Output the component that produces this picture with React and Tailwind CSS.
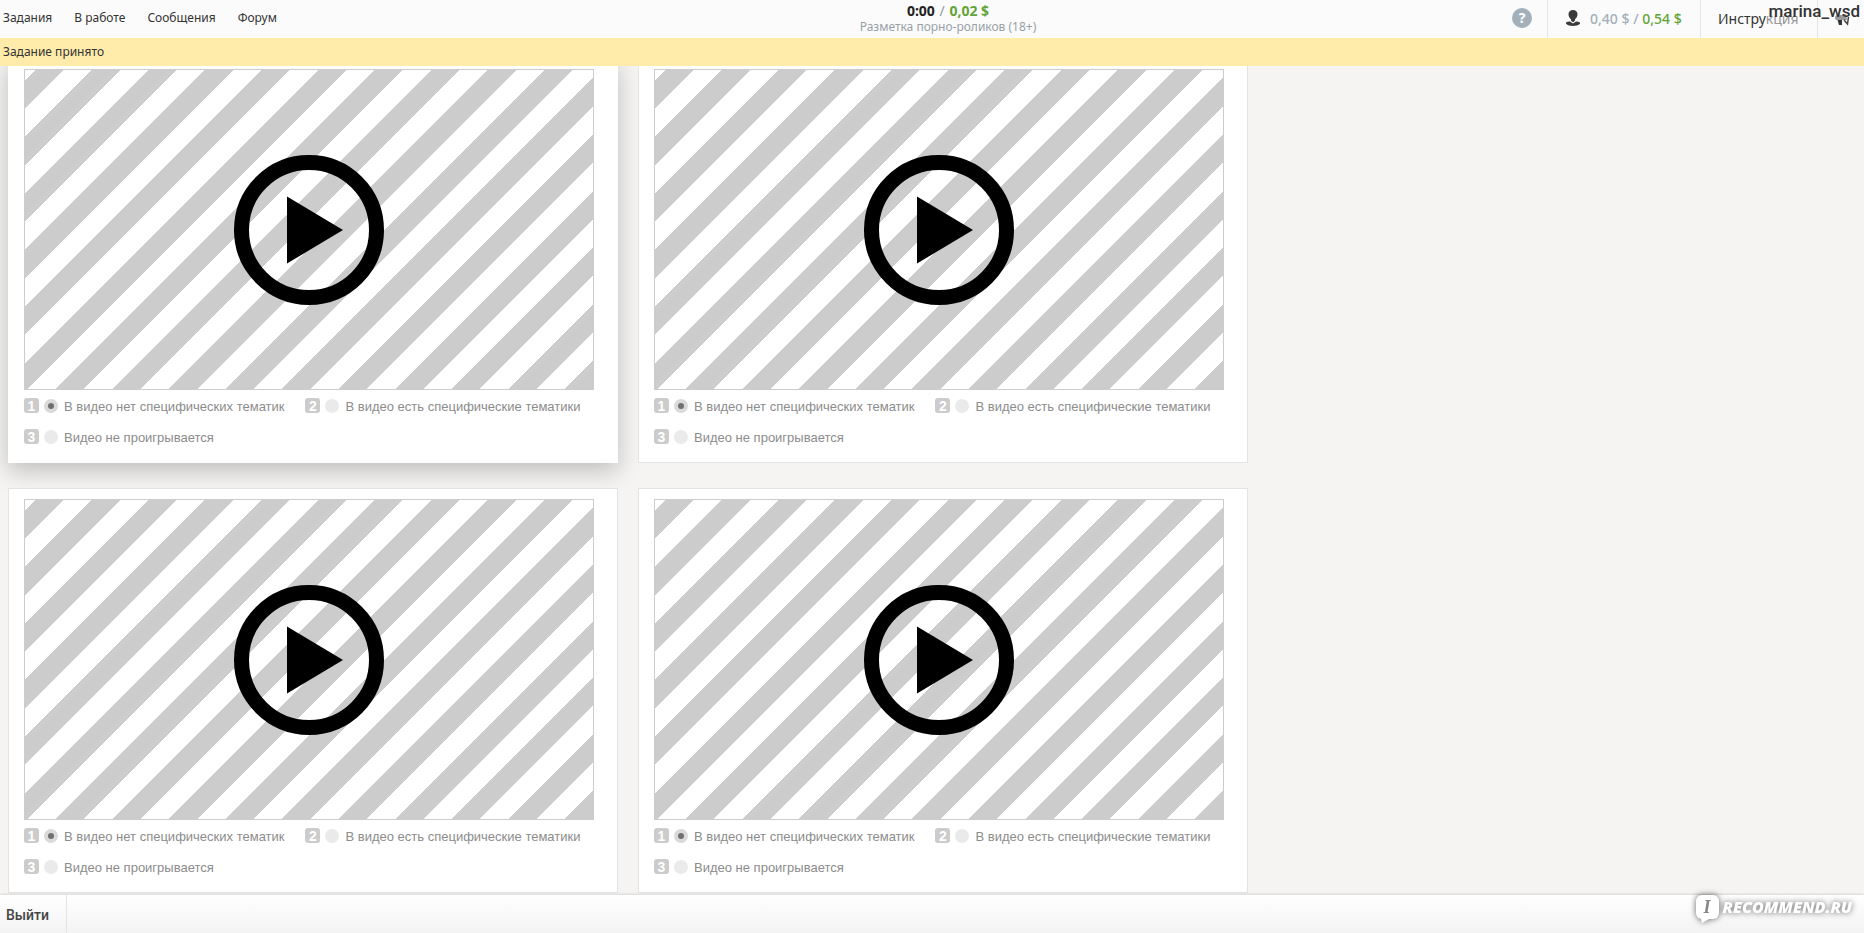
import { useState } from 'react';

const navLinks = ['Задания', 'В работе', 'Сообщения', 'Форум'];

const options = [
  'В видео нет специфических тематик',
  'В видео есть специфические тематики',
  'Видео не проигрывается',
];

const tasks = [
  { id: 1, active: true },
  { id: 2, active: false },
  { id: 3, active: false },
  { id: 4, active: false },
];

const UserIcon = () => (
  <svg width="16" height="18" viewBox="0 0 16 18" fill="#3c3c3c" aria-hidden="true">
    <path d="M8 1c2.800 0 4.500 1.800 4.500 4.300 0 2.200-1.100 4-2.500 5v1.500L8 13.200 6 11.800v-1.500c-1.400-1-2.500-2.800-2.500-5C3.500 2.800 5.200 1 8 1z" />
    <path d="M1 13.600c1.200-.8 2.600-1.200 4-1.100l3 1.900 3-1.900c1.400-.1 2.800.3 4 1.100v1.200C13.400 16.300 10.900 17 8 17s-5.400-.7-7-2.200z" />
  </svg>
);

const MegaphoneIcon = () => (
  <svg width="16" height="14" viewBox="0 0 16 14" aria-hidden="true">
    <path d="M1 5.500C1 4 2 3 3.500 3H9l3-1 1 6H2.500C1.500 8 1 7 1 5.500z" fill="#999" />
    <path d="M3.500 8H8v5H5z" fill="#333" />
    <path d="M10 8l3.500 4 1-7" fill="none" stroke="#444" strokeWidth="1.500" />
  </svg>
);

const PlayIcon = () => (
  <svg width="150" height="150" viewBox="0 0 150 150" aria-hidden="true">
    <circle cx="75" cy="75" r="67.500" fill="none" stroke="#000" strokeWidth="15" />
    <path d="M53 41.500v67l56-33.500z" fill="#000" />
  </svg>
);

const TaskCard = ({ id, active }) => {
  const [selected, setSelected] = useState(0);

  return (
    <section
      className={`w-[610px] max-w-full border bg-white px-[15px] pt-[10px] pb-[18px] ${
        active
          ? 'border-white shadow-[0_8px_22px_rgba(0,0,0,0.22)]'
          : 'border-[#e3e3e3]'
      }`}
    >
      <div className="mr-[8px] flex aspect-[570/321] items-center justify-center border border-[#ccc] bg-[repeating-linear-gradient(-45deg,#ccc_0,#ccc_20px,#fff_20px,#fff_40px)]">
        <button type="button" aria-label="Воспроизвести">
          <PlayIcon />
        </button>
      </div>
      <fieldset className="mt-[8px] flex flex-wrap gap-x-[21px] gap-y-4">
        {options.map((option, idx) => (
          <label key={option} className="flex h-[15px] items-center text-[13px] leading-4 text-[#8c8c8c]">
            <span className="flex size-[15px] items-center justify-center rounded-[3px] bg-[#ccc] text-[14px] leading-none font-bold text-white">
              {idx + 1}
            </span>
            <input
              type="radio"
              name={`task-${id}`}
              checked={selected === idx}
              onChange={() => setSelected(idx)}
              className="mr-[6px] ml-[5px] size-[14px] appearance-none rounded-full bg-[#eaeaea] checked:border-4 checked:border-[#dadada] checked:bg-[#707070]"
            />
            <span className="pt-[2px]">{option}</span>
          </label>
        ))}
      </fieldset>
    </section>
  );
};

const Header = () => (
  <header className="grid h-[38px] shrink-0 grid-cols-[1fr_auto_1fr] bg-[#fbfbfb] font-['Noto_Sans',sans-serif]">
    <nav className="flex items-center gap-[22px] pb-[2px] pl-[3px] text-[12px] text-[#333]">
      {navLinks.map((link) => (
        <a key={link} href="#">
          {link}
        </a>
      ))}
    </nav>

    <div className="pt-[3px] pl-8 text-center">
      <p className="text-[14px] leading-4 font-bold text-[#222]">
        0:00 <span className="px-px font-normal text-[#8f989f]">/</span>{' '}
        <span className="text-[#62a436]">0,02 $</span>
      </p>
      <p className="text-[12px] leading-4 text-[#98a1a8]">Разметка порно-роликов (18+)</p>
    </div>

    <div className="relative flex items-stretch justify-end">
      <button
        type="button"
        aria-label="Помощь"
        className="mr-[15px] mb-[2px] size-5 self-center rounded-full bg-[#a3b0ba] text-[14px] leading-5 font-bold text-white"
      >
        ?
      </button>
      <div className="flex w-[153px] items-center border-l border-[#e5e5e5] pb-[2px] pl-[17px] text-[14px] font-medium">
        <UserIcon />
        <span className="ml-[9px] whitespace-nowrap text-[#a3b0ba]">
          0,40 $ / <span className="text-[#62a436]">0,54 $</span>
        </span>
      </div>
      <a
        href="#"
        className="flex w-[117px] items-center border-l border-[#e5e5e5] pb-[2px] pl-[17px] text-[14px] text-[#333]"
      >
        Инстру<span className="text-[#999]">кция</span>
      </a>
      <button
        type="button"
        aria-label="Уведомления"
        className="flex w-[47px] items-center border-l border-[#e5e5e5] pl-4"
      >
        <MegaphoneIcon />
      </button>
      <span className="absolute top-0 right-1 font-['Roboto',sans-serif] text-[17px] leading-[22px] font-medium text-[#333]">
        marina_wsd
      </span>
    </div>
  </header>
);

const Watermark = () => (
  <div className="absolute right-[12px] bottom-[14px] flex items-center gap-1 font-['Open_Sans',sans-serif] text-white italic drop-shadow-[0_0_3px_rgba(0,0,0,0.6)]">
    <span className="relative flex h-6 w-[23px] items-center justify-center rounded-[6px] bg-white font-['Liberation_Serif',serif] text-[18px] font-bold text-[#888]">
      I
      <svg width="8" height="5" viewBox="0 0 8 5" className="absolute top-full left-[5px]" aria-hidden="true">
        <path d="M0 0h8L1 4z" fill="#fff" />
      </svg>
    </span>
    <span className="text-[16px] leading-6 font-extrabold">RECOMMEND.RU</span>
  </div>
);

const App = () => {
  return (
    <div className="flex h-screen flex-col overflow-hidden bg-[#f5f4f3] font-['Liberation_Sans',sans-serif]">
      <Header />
      <div
        role="status"
        className="relative z-10 h-7 shrink-0 bg-[#ffecab] pl-[3px] font-['Noto_Sans',sans-serif] text-[12px] leading-7 text-[#333]"
      >
        Задание принято
      </div>

      <main className="min-h-0 flex-1 overflow-hidden">
        <div className="-mt-2 flex flex-wrap gap-x-5 gap-y-[25px] pl-2">
          {tasks.map((task) => (
            <TaskCard key={task.id} id={task.id} active={task.active} />
          ))}
        </div>
      </main>

      <footer className="relative flex h-[38px] shrink-0 bg-linear-to-b from-white to-[#f3f3f3] shadow-[0_-1px_2px_rgba(0,0,0,0.12)]">
        <button
          type="button"
          className="w-[67px] border-r border-[#dfe5ea] pt-[2px] pl-[6px] text-left font-['Roboto',sans-serif] text-[14px] font-medium text-[#444]"
        >
          Выйти
        </button>
        <Watermark />
      </footer>
    </div>
  );
};

export default App;
